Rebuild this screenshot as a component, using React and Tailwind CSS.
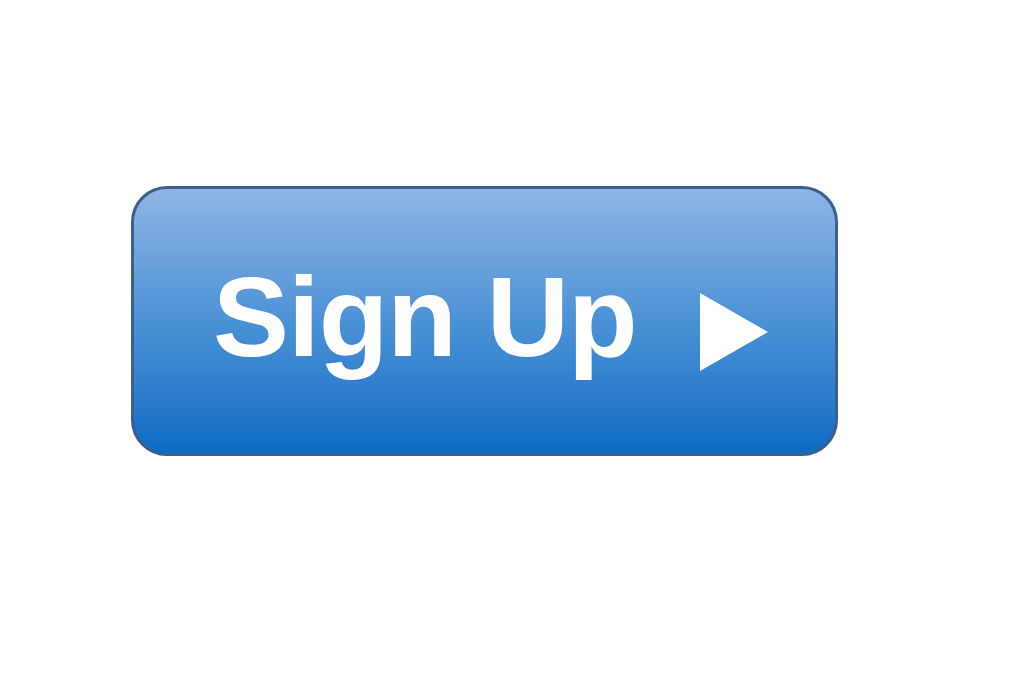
import React from 'react';

export default function App() {
  return (
    <div className="w-[1024px] h-[680px] bg-white pl-[131px] pt-[186px]" style={{ fontFamily: '"Liberation Sans", Arial, sans-serif' }}>
      <button
        type="button"
        className="w-[707px] h-[270px] rounded-[36px] border-[3px] border-[#3b5f8e] bg-gradient-to-b from-[#8eb5e4] via-[#4a92d6] to-[#0a6bc3] flex items-center pl-[79px] text-white"
      >
        <span className="text-[114px] font-bold leading-none tracking-[-1px] mt-[-8px]">Sign Up</span>
        <svg className="ml-[63px] mt-[22px]" width="68" height="78" viewBox="0 0 68 78">
          <polygon points="0,0 68,39 0,78" fill="#ffffff" />
        </svg>
      </button>
    </div>
  );
}
